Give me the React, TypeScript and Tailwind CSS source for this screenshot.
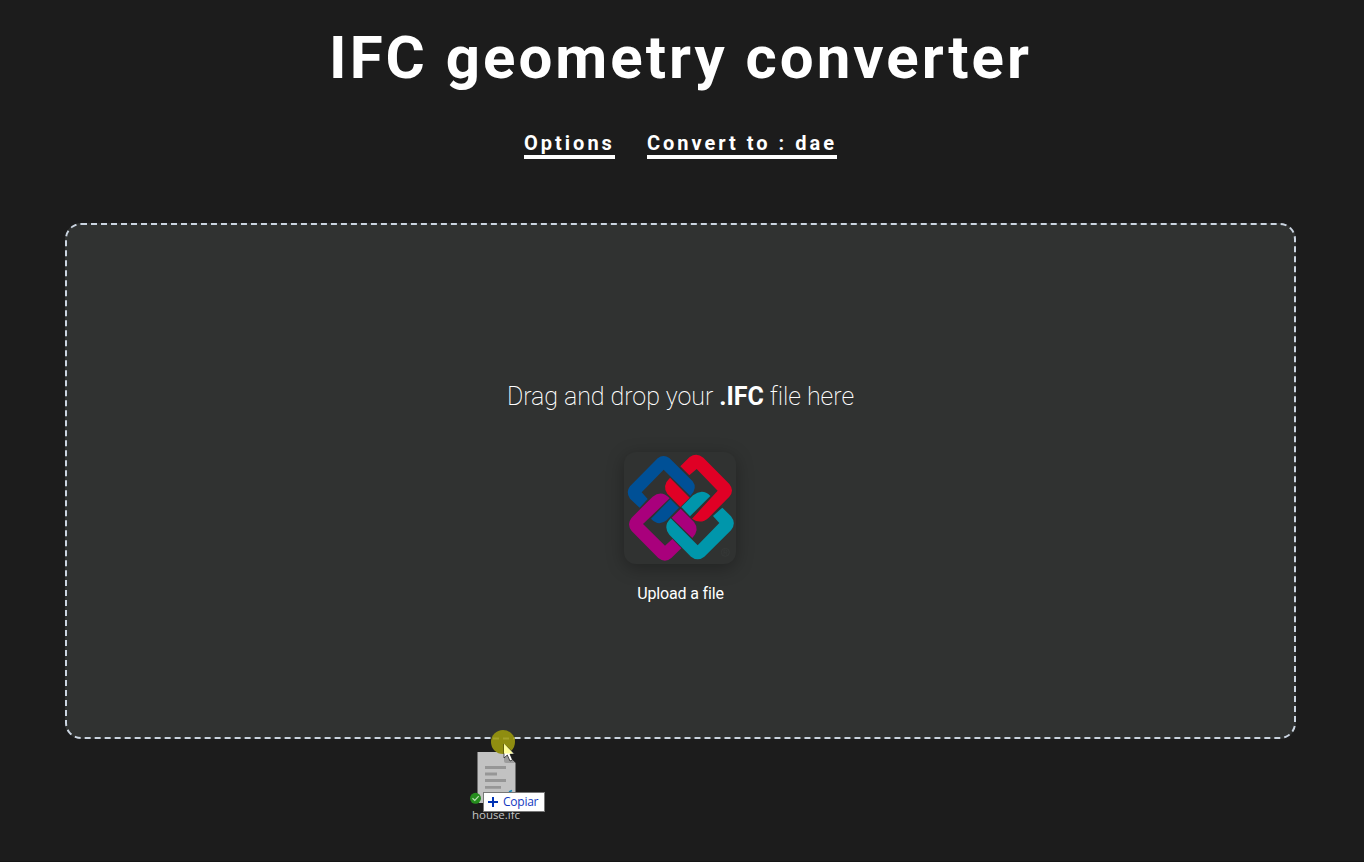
function IfcLogo() {
  return (
    <svg className="block size-28" viewBox="42 36 336 336" aria-hidden="true">
      <g fill="#005096">
        <path d="M89 203L60 176Q46 157 60 139L143 55Q160 41 178 54L248 124Q264 145 241 168L161 89L95 157L113 177Z" />
        <path d="M181 177L207 203L170 241Q145 260 123 236Z" />
      </g>
      <g fill="#e00025">
        <path d="M211 79L239 51Q260 37 280 53L358 132Q374 152 358 170L296 233Q272 255 246 236L323 152L260 87L238 106Z" />
        <path d="M180 113L239 173L211 201L172 161Q155 137 180 113Z" />
      </g>
      <g fill="#a9007c">
        <path d="M65 233L128 170Q155 149 179 175L99 252L165 317L187 297L214 325L184 354Q165 370 145 354L65 273Q49 253 65 233Z" />
        <path d="M212 206L252 246Q270 269 247 294L185 233Z" />
      </g>
      <g fill="#0096ab">
        <path d="M337 203L363 229Q380 250 363 271L283 350Q263 366 243 350L178 284Q158 259 182 235L263 316L328 249L309 228Z" />
        <path d="M214 201L249 166Q278 144 301 168L240 229Z" />
      </g>
      <circle cx="346" cy="337" r="12" fill="none" stroke="#383b3a" strokeWidth="2" />
      <path d="M342 344V330H347Q351 330 351 334T347 338H342M346 338L351 344" fill="none" stroke="#383b3a" strokeWidth="2" />
    </svg>
  );
}

function DraggedFile() {
  return (
    <svg
      className="pointer-events-none absolute top-[725px] left-[460px] h-[105px] w-[100px]"
      viewBox="0 0 100 105"
      aria-hidden="true"
    >
      <path d="M17.500 27H44L55.500 38V78H17.500Z" fill="#c2c2c2" />
      <path d="M44 27L55.500 38H46Q44 38 44 36Z" fill="#9c9c9c" />
      <path d="M25 42.500H46M25 49H37M25 55.500H46M25 62.300H41" stroke="#969696" strokeWidth="2.800" />
      <path d="M49 67L52 65.500" stroke="#1687b8" strokeWidth="1.500" />
      <circle cx="15.500" cy="73.300" r="5.500" fill="#258c1d" />
      <path d="M12.500 73.300L14.800 75.400L18.700 71.200" fill="none" stroke="#b9dfb5" strokeWidth="1.200" />
      <text x="12" y="94" textLength="48" fill="#c4c4c4" fontSize="11.500" fontFamily="'Open Sans', 'Noto Sans', sans-serif">house.ifc</text>
      <rect x="23.500" y="67.500" width="61" height="19" fill="#fff" stroke="#777" />
      <path d="M28 77H38M33 72V82" stroke="#0032b4" strokeWidth="2" />
      <text x="43" y="81" textLength="35.500" fill="#1238c0" fontSize="12" fontFamily="'Open Sans', 'Noto Sans', sans-serif">Copiar</text>
      <circle cx="43" cy="17" r="12" fill="#8f8d10" />
      <path d="M31 13.500H55" stroke="#b4b13a" strokeWidth="2" strokeDasharray="6 4" strokeDashoffset="-2" opacity=".6" />
      <path d="M44 19V33L47.300 30L50 36L52.500 35L50 29H54.500Z" fill="#fff" stroke="#111" strokeWidth=".7" />
      <path d="M44 18.500V28.500H53Q50 25 44 18.500Z" fill="#ffff9c" />
    </svg>
  );
}

export default function App() {
  return (
    <main className="relative flex h-[862px] w-full flex-col items-center overflow-hidden border-b border-[#151515] bg-[#1c1c1c] font-[Roboto,sans-serif] text-white">
      <h1 className="mt-7 mr-[3px] text-[60px] leading-[60px] font-bold tracking-[3px] whitespace-nowrap">IFC geometry converter</h1>
      <nav className="mt-[43px] mr-[3px] flex gap-8 text-xl leading-6 font-bold tracking-[3px]">
        <button className="border-b-4 border-white">Options</button>
        <button className="border-b-4 border-white">Convert to : dae</button>
      </nav>
      <section className="mt-16 mr-[3px] flex h-[516px] w-[1231px] shrink-0 flex-col items-center rounded-2xl border-2 border-dashed border-[#cbd5e1] bg-[#303231]">
        <p className="mt-[154px] text-[25px] leading-9 font-extralight tracking-[-0.05px] whitespace-nowrap">
          Drag and drop your <b className="font-bold">.IFC</b> file here
        </p>
        <button className="mt-[37px] mr-px flex flex-col items-center">
          <span className="rounded-xl bg-[#303231] shadow-[0_4px_18px_rgba(0,0,0,0.3)]">
            <IfcLogo />
          </span>
          <span className="mt-[18px] pl-px text-base leading-6 tracking-[-0.15px]">Upload a file</span>
        </button>
      </section>
      <DraggedFile />
    </main>
  );
}
